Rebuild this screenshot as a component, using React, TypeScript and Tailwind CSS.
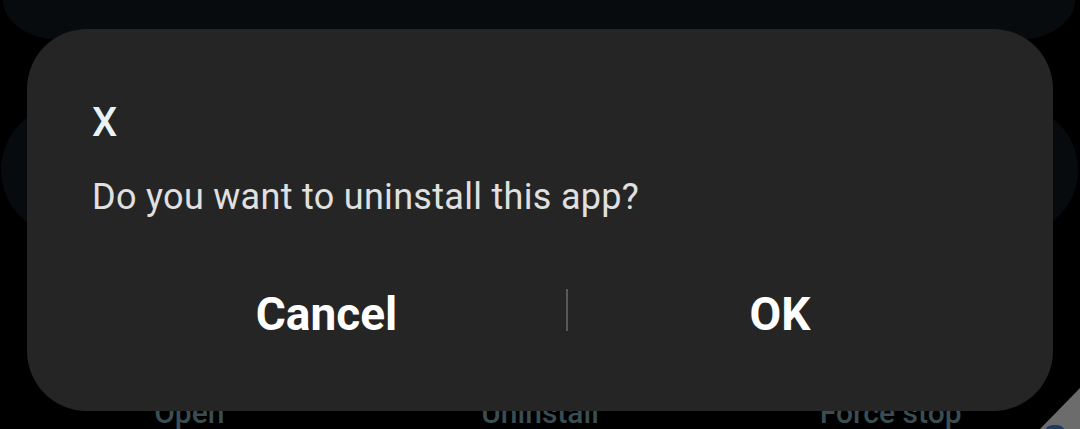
import React from 'react';

const actions = ['Open', 'Uninstall', 'Force stop'];

function Background() {
  return (
    <div className="flex flex-col">
      <div className="h-[40px] ml-[3px] mr-[5px] bg-[#070b0e] rounded-bl-[58px_40px] rounded-br-[58px_40px]" />
      <div className="mt-[65px] h-[130px] ml-[1px] mr-[2px] bg-[#070b0e] rounded-full" />
      <div className="mt-[163px] grid grid-cols-3 px-[14px]">
        {actions.map((a) => (
          <span key={a} className="text-center text-[30px] leading-[30px] font-medium text-[#3a4d53]">
            {a}
          </span>
        ))}
      </div>
    </div>
  );
}

function Dialog() {
  return (
    <div className="absolute left-[27px] top-[29px] w-[1026px] h-[382px] rounded-[60px] bg-[#252525] flex flex-col pt-[74px]">
      <div className="pl-[65px] text-[40px] leading-[40px] font-medium text-[#e6f3f7]">X</div>
      <div className="pl-[65px] mt-[36px] text-[36px] leading-[36px] tracking-[0.3px] text-[#e0e0e0]">
        Do you want to uninstall this app?
      </div>
      <div className="mt-[76px] flex items-start pl-[60px] pr-[61px]">
        <button className="w-[479px] text-center text-[46px] leading-[46px] font-bold text-white">Cancel</button>
        <div className="w-[2px] h-[42px] -mt-[2px] bg-[#585858]" />
        <button className="flex-1 text-center text-[46px] leading-[46px] font-bold text-white">OK</button>
      </div>
    </div>
  );
}

export default function App() {
  return (
    <div className="relative w-[1080px] h-[429px] overflow-hidden bg-black font-['Roboto',sans-serif]">
      <Background />
      <Dialog />
      <svg className="absolute right-0 bottom-0" width="40" height="41" viewBox="0 0 40 41">
        <polygon points="40,0 40,41 0,41" fill="#6c6c6c" />
        <path d="M6 41 C7 38 10 37 15 37 C21 37 23 39 24 41 Z" fill="#1c3a66" />
      </svg>
    </div>
  );
}
